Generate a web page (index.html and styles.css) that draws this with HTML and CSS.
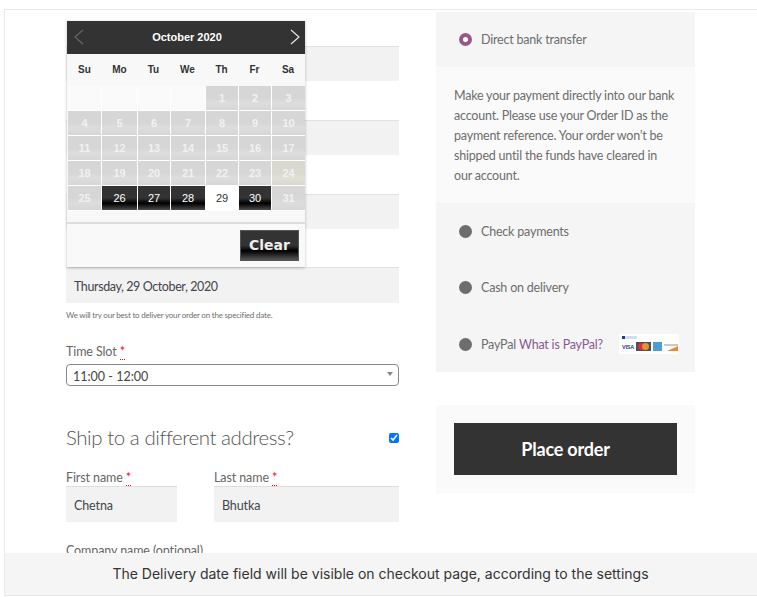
FILE: index.html
```html
<!DOCTYPE HTML>
<html>
<head>
<meta http-equiv="Content-Type" content="text/html; charset=utf-8" />
	<title>Checkout</title>
<link rel="stylesheet" href="styles.css">
</head>
<body>
	<div class="page">
		<div class="main">
			<div class="billing">
				<div class="band"></div>
				<div class="band"></div>
				<div class="band"></div>
				<div class="band band-date">Thursday, 29 October, 2020</div>
				<p class="note">We will try our best to deliver your order on the specified date.</p>
				<label class="label slot-label">Time Slot <abbr>*</abbr></label>
				<div class="select">11:00 - 12:00<span class="arrow"></span></div>
				<div class="ship">
					<h3>Ship to a different address?</h3>
					<input type="checkbox" checked>
				</div>
				<div class="names">
					<div class="first">
						<label class="label">First name <abbr>*</abbr></label>
						<div class="band band-name">Chetna</div>
					</div>
					<div class="last">
						<label class="label">Last name <abbr>*</abbr></label>
						<div class="band band-name">Bhutka</div>
					</div>
				</div>
				<label class="label company">Company name (optional)</label>

				<div class="calendar">
					<div class="cal-head">
						<svg class="nav" width="12" height="16" viewBox="0 0 12 16"><path d="M10 1 L2 8 L10 15" fill="none" stroke="#666" stroke-width="1.2"/></svg>
						<span>October 2020</span>
						<svg class="nav" width="12" height="16" viewBox="0 0 12 16"><path d="M2 1 L10 8 L2 15" fill="none" stroke="#e8e8e8" stroke-width="1.2"/></svg>
					</div>
					<div class="cal-days">
						<span>Su</span><span>Mo</span><span>Tu</span><span>We</span><span>Th</span><span>Fr</span><span>Sa</span>
					</div>
					<div class="cal-grid">
						<i class="blank"></i><i class="blank"></i><i class="blank"></i><i class="blank"></i><i>1</i><i>2</i><i>3</i>
						<i>4</i><i>5</i><i>6</i><i>7</i><i>8</i><i>9</i><i>10</i>
						<i>11</i><i>12</i><i>13</i><i>14</i><i>15</i><i>16</i><i>17</i>
						<i>18</i><i>19</i><i>20</i><i>21</i><i>22</i><i>23</i><i class="holiday">24</i>
						<i>25</i><i class="on">26</i><i class="on">27</i><i class="on">28</i><i class="today">29</i><i class="on">30</i><i>31</i>
					</div>
					<div class="cal-foot"><button class="clear">Clear</button></div>
				</div>
			</div>

			<div class="side">
				<div class="methods">
					<div class="method method-first"><span class="radio radio-on"></span>Direct bank transfer</div>
					<div class="desc">Make your payment directly into our bank account. Please use your Order ID as the payment reference. Your order won’t be shipped until the funds have cleared in our account.</div>
					<div class="others">
						<div class="method"><span class="radio"></span>Check payments</div>
						<div class="method"><span class="radio"></span>Cash on delivery</div>
						<div class="method method-paypal"><span class="radio"></span>PayPal&nbsp;<a href="#">What is PayPal?</a>
							<svg class="cards" width="60" height="20" viewBox="0 0 60 20">
								<rect width="60" height="20" fill="#fff"/>
								<rect x="3" y="2" width="15" height="3" fill="#d5dcea"/>
								<rect x="3" y="2" width="3" height="3" fill="#1f3f87"/>
								<text x="3" y="15" font-size="5.500" font-weight="bold" font-family="Liberation Sans" fill="#2a3f80">VISA</text>
								<rect x="17" y="8" width="15" height="9" fill="#4a4f63"/>
								<circle cx="22.500" cy="12.500" r="3.500" fill="#d9342b"/>
								<circle cx="26.500" cy="12.500" r="3.500" fill="#e8932c"/>
								<rect x="34" y="8" width="9" height="9" fill="#4b9fd5"/>
								<rect x="45" y="10" width="14" height="2" fill="#c9c9c9"/>
								<path d="M48 17 L59 17 L59 12 Z" fill="#ee8a2c"/>
							</svg>
						</div>
					</div>
				</div>
				<div class="order"><button class="place">Place order</button></div>
			</div>
		</div>
		<div class="caption">The Delivery date field will be visible on checkout page, according to the settings</div>
	</div>
</body>
</html>
```

FILE: styles.css
```css
*{
	margin: 0;
	padding: 0;
	box-sizing: border-box;
}
body{
	background: #fff;
	font-family: "Lato", "Noto Sans", sans-serif;
	color: #666;
	padding: 9px 0 0 4px;
}
.page{
	height: 587px;
	border-top: 1px solid #e9e9e9;
	border-left: 1px solid #e9e9e9;
	border-bottom: 1px solid #e9e9e9;
	display: flex;
	flex-direction: column;
}
.main{
	height: 543px;
	overflow: hidden;
	display: flex;
	align-items: flex-start;
	padding-left: 61px;
}
.billing{
	width: 333px;
	position: relative;
	padding-top: 36px;
}
.band{
	height: 35px;
	background: #f2f2f2;
	border-top: 1px solid #e2e2e2;
	margin-bottom: 39px;
	font-size: 12.500px;
	letter-spacing: -0.1px;
	line-height: 36px;
	padding-left: 8px;
	color: #43454b;
}
.band-date{
	height: 36px;
	margin-top: -1px;
	margin-bottom: 0;
	letter-spacing: -0.4px;
	line-height: 37px;
}
.note{
	font-size: 8px;
	letter-spacing: -0.2px;
	line-height: 10px;
	margin-top: 7px;
	color: #6d6d6d;
}
.label{
	display: block;
	font-size: 12.500px;
	letter-spacing: -0.1px;
	line-height: 16px;
	color: #666;
}
.label abbr{
	color: #f00;
	border-bottom: 1px dotted #f00;
}
.slot-label{
	margin-top: 24px;
}
.select{
	height: 22px;
	margin-top: 4px;
	border: 1px solid #8a8a8a;
	border-radius: 4px;
	font-size: 12.500px;
	line-height: 24px;
	padding-left: 6px;
	color: #444;
	position: relative;
}
.arrow{
	position: absolute;
	right: 5px;
	top: 7px;
	border-top: 4px solid #888;
	border-left: 3px solid transparent;
	border-right: 3px solid transparent;
}
.ship{
	display: flex;
	justify-content: space-between;
	align-items: center;
	margin-top: 37px;
}
.ship h3{
	font-size: 20.500px;
	font-weight: 300;
	letter-spacing: -0.45px;
	line-height: 28px;
	color: #555;
}
.ship input{
	width: 10px;
	height: 10px;
	margin: 2px 0 0;
}
.names{
	display: flex;
	gap: 37px;
	margin-top: 19px;
}
.first{
	width: 111px;
}
.last{
	width: 185px;
}
.band-name{
	height: 36px;
	margin: 0;
	border-top: 1px solid #ddd;
	line-height: 37px;
}
.company{
	margin-top: 21px;
}

.calendar{
	position: absolute;
	left: 1px;
	top: 11px;
	width: 238px;
	height: 246px;
	background: #f8f8f8;
	box-shadow: 0 1px 3px rgba(0,0,0,0.25);
	font-family: "Liberation Sans", Arial, sans-serif;
}
.cal-head{
	height: 33px;
	background: #333;
	display: flex;
	justify-content: space-between;
	align-items: center;
	padding: 0 4px 2px 6px;
	color: #fff;
	font-size: 11px;
	font-weight: bold;
}
.cal-days{
	height: 32px;
	display: grid;
	grid-template-columns: 35px 35px 33px 35px 33px 33px 34px;
	align-items: center;
	text-align: center;
	font-size: 10px;
	font-weight: bold;
	color: #333;
	padding-bottom: 2px;
}
.cal-grid{
	display: grid;
	grid-template-columns: 33px 35px 32px 34px 32px 32px 33px;
	grid-auto-rows: 24px;
	gap: 1px;
	background: #fff;
	margin-left: 1px;
	height: 125px;
}
.cal-grid i{
	font-style: normal;
	font-size: 11px;
	font-weight: bold;
	text-align: center;
	line-height: 24px;
	color: #f1f1f1;
	background: linear-gradient(#d6d6d6 50%, #dddddd 70%, #d6d6d6);
}
.cal-grid .blank{
	background: #fafafa;
}
.cal-grid .holiday{
	background: linear-gradient(#d9d9d0 50%, #e0e0d8 70%, #d8d8cf);
}
.cal-grid .on{
	color: #fff;
	font-weight: normal;
	background: linear-gradient(#333 50%, #000 72%, #4a4a4a);
}
.cal-grid .today{
	color: #333;
	font-weight: normal;
	background: #fff;
}
.cal-foot{
	margin-top: 11px;
	height: 45px;
	border-top: 2px solid #ddd;
	background: #f9f9f9;
	display: flex;
	justify-content: flex-end;
	padding: 6px 6px 0 0;
}
.clear{
	width: 59px;
	height: 31px;
	border: 1px solid #555;
	background: linear-gradient(#333 50%, #000 68%, #555);
	color: #eee;
	font-family: "DejaVu Sans", Verdana, sans-serif;
	font-size: 14px;
	font-weight: bold;
	padding-bottom: 1px;
}

.side{
	width: 259px;
	margin-left: 37px;
	padding-top: 2px;
}
.methods{
	margin-bottom: 33px;
}
.method{
	display: flex;
	align-items: center;
	height: 56px;
	padding-left: 23px;
	font-size: 12.500px;
	letter-spacing: -0.2px;
	color: #6d6d6d;
}
.method-first{
	height: 55px;
	background: #f5f5f5;
}
.method-paypal{
	padding-top: 2px;
}
.method a{
	color: #8a5a8f;
	text-decoration: none;
}
.radio{
	width: 13px;
	height: 13px;
	border-radius: 50%;
	background: #6d6d6d;
	margin-right: 9px;
}
.radio-on{
	background: #fff;
	border: 4px solid #96588a;
}
.desc{
	height: 136px;
	background: #fafafa;
	padding: 19px 18px 0;
	font-size: 12.500px;
	letter-spacing: -0.2px;
	line-height: 20px;
	color: #6d6d6d;
}
.others{
	height: 169px;
	background: #f5f5f5;
}
.cards{
	margin-left: 16px;
}
.order{
	height: 88px;
	background: #fafafa;
	padding: 18px;
}
.place{
	display: block;
	width: 223px;
	height: 52px;
	border: 0;
	background: #333;
	color: #fff;
	font-family: inherit;
	font-size: 18px;
	font-weight: bold;
	letter-spacing: -0.2px;
}
.caption{
	flex: 1;
	background: #f5f5f5;
	font-family: Inter, sans-serif;
	font-size: 14px;
	color: #333;
	display: flex;
	align-items: center;
	justify-content: center;
	padding: 0 1px 2px 0;
}
```
